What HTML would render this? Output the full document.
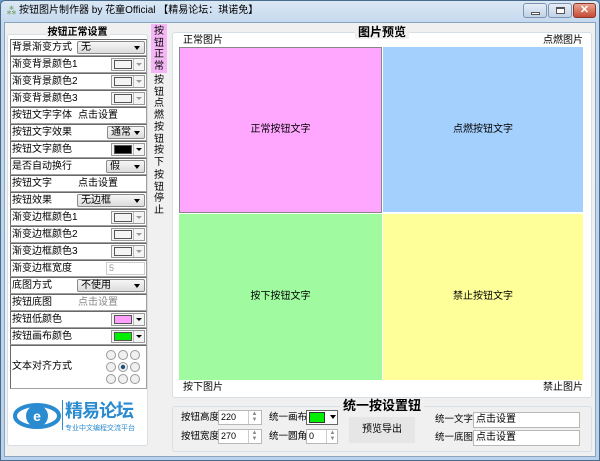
<!DOCTYPE html><html><head><meta charset="utf-8"><style>
*{margin:0;padding:0;box-sizing:border-box}
body{width:600px;height:461px;overflow:hidden;background:#6a9ac4;font-family:"Liberation Sans","Noto Sans CJK SC",sans-serif;font-size:10px;line-height:12px;color:#000;position:relative;white-space:nowrap}
.a{position:absolute}
.win{left:0;top:0;width:600px;height:461px;background:linear-gradient(#dbe8f5,#c4d8ee 22px,#b9d1ea);border:1px solid #4a6a8c;border-radius:5px 5px 0 0}
.client{left:4px;top:22px;width:592px;height:435px;background:#f0f0f0;border:1px solid #8aa5c2}
.gb{border:1px solid #d5dfe5;border-radius:3px;background:#fff}
.row{position:absolute;left:10px;width:137px;height:17px;background:#fff;border:1px solid #a0a0a0;border-top-color:#696969;border-left-color:#696969}
.row .l{position:absolute;left:1px;top:2px;white-space:nowrap}
.row .v{position:absolute;left:67px;top:2px}
.dd{position:absolute;right:1px;top:1px;height:13px;background:linear-gradient(#f6f6f6,#dcdcdc);border:1px solid #8a8a8a;border-radius:2px;padding-left:3px;line-height:11px}
.dd:after{content:"";position:absolute;right:4px;top:4px;border:3px solid transparent;border-top:4px solid #000}
.cb{position:absolute;right:1px;top:1px;width:34px;height:13px;border:1px solid #999;background:#f4f4f4}
.cb i{position:absolute;left:2px;top:1px;width:18px;height:9px;border:1px solid #555}
.cb b{position:absolute;right:0;top:0;width:11px;height:11px;border-left:1px solid #bbb}
.cb b:after{content:"";position:absolute;left:2px;top:4px;border:3px solid transparent;border-top:3px solid #999}
.cb.k b:after{border-top-color:#000}
.q{position:absolute;font-size:10px;display:flex;align-items:center;justify-content:center}
.tb{position:absolute;width:14px;font-size:10px;line-height:12px;text-align:center;white-space:normal}
.inp{position:absolute;background:#fff;border:1px solid #b8b8b8;height:15px;padding-left:2px;line-height:13px;font-size:9px}
.sp{position:absolute;width:12px;height:13px;border-left:1px solid #ccc;font-size:6px;color:#888;text-align:center;line-height:6px}
</style></head><body>
<div class="a win"></div>
<div class="a" style="left:6px;top:5px;font-size:11px;color:#5a8a3a">⁂</div>
<div class="a" style="left:19px;top:5px;font-size:10px">按钮图片制作器 by 花童Official 【精易论坛：琪诺免】</div>
<div class="a" style="left:523px;top:3px;width:24px;height:15px;border:1px solid #7d93b0;border-radius:3px;background:linear-gradient(#e6eef7,#c1d2e6)"><div class="a" style="left:7px;top:8px;width:9px;height:3px;border:1px solid #555;background:#fff"></div></div>
<div class="a" style="left:548px;top:3px;width:24px;height:15px;border:1px solid #7d93b0;border-radius:3px;background:linear-gradient(#e6eef7,#c1d2e6)"><div class="a" style="left:7px;top:3px;width:9px;height:7px;border:1px solid #555;border-top-width:2px;background:#fff"></div></div>
<div class="a" style="left:573px;top:3px;width:23px;height:15px;border:1px solid #8a3b2c;border-radius:3px;background:linear-gradient(#e9a48f,#c74b33);color:#fff;font-weight:bold;text-align:center;line-height:13px;font-size:11px">✕</div>
<div class="a client"></div>

<!-- left group -->
<div class="a gb" style="left:7px;top:34px;width:141px;height:412px"></div>
<div class="a" style="left:7px;top:27px;width:141px;text-align:center;font-weight:bold;font-size:10px"><span style="background:#f0f0f0;padding:0 2px">按钮正常设置</span></div>

<div class="row" style="top:39px"><span class="l">背景渐变方式</span><div class="dd" style="left:66px;width:68px">无</div></div>
<div class="row" style="top:56px"><span class="l">渐变背景颜色1</span><div class="cb"><i style="background:#f4f4f4"></i><b></b></div></div>
<div class="row" style="top:73px"><span class="l">渐变背景颜色2</span><div class="cb"><i style="background:#f4f4f4"></i><b></b></div></div>
<div class="row" style="top:90px"><span class="l">渐变背景颜色3</span><div class="cb"><i style="background:#f4f4f4"></i><b></b></div></div>
<div class="row" style="top:107px"><span class="l">按钮文字字体</span><span class="v">点击设置</span></div>
<div class="row" style="top:124px"><span class="l">按钮文字效果</span><div class="dd" style="left:96px;width:38px">通常</div></div>
<div class="row" style="top:141px"><span class="l">按钮文字颜色</span><div class="cb k"><i style="background:#000"></i><b></b></div></div>
<div class="row" style="top:158px"><span class="l">是否自动换行</span><div class="dd" style="left:95px;width:39px">假</div></div>
<div class="row" style="top:175px"><span class="l">按钮文字</span><span class="v">点击设置</span></div>
<div class="row" style="top:192px"><span class="l">按钮效果</span><div class="dd" style="left:66px;width:68px">无边框</div></div>
<div class="row" style="top:209px"><span class="l">渐变边框颜色1</span><div class="cb"><i style="background:#f4f4f4"></i><b></b></div></div>
<div class="row" style="top:226px"><span class="l">渐变边框颜色2</span><div class="cb"><i style="background:#f4f4f4"></i><b></b></div></div>
<div class="row" style="top:243px"><span class="l">渐变边框颜色3</span><div class="cb"><i style="background:#f4f4f4"></i><b></b></div></div>
<div class="row" style="top:260px"><span class="l">渐变边框宽度</span><div class="a" style="left:95px;top:1px;width:39px;height:13px;border:1px solid #ccc;color:#999;padding-left:2px;line-height:11px;font-size:9px">5</div></div>
<div class="row" style="top:277px"><span class="l">底图方式</span><div class="dd" style="left:66px;width:68px">不使用</div></div>
<div class="row" style="top:294px"><span class="l">按钮底图</span><span class="v" style="color:#888">点击设置</span></div>
<div class="row" style="top:311px"><span class="l">按钮低颜色</span><div class="cb k"><i style="background:#ffa0ff"></i><b></b></div></div>
<div class="row" style="top:328px"><span class="l">按钮画布颜色</span><div class="cb k"><i style="background:#00ee00"></i><b></b></div></div>
<div class="row" style="top:345px;height:44px"><span class="l" style="top:15px">文本对齐方式</span>
<svg class="a" style="left:93px;top:2px" width="40" height="40" viewBox="0 0 40 40"><g fill="#f0f0f0" stroke="#999"><circle cx="7" cy="7" r="4.5"/><circle cx="19" cy="7" r="4.5"/><circle cx="31" cy="7" r="4.5"/><circle cx="7" cy="19" r="4.5"/><circle cx="19" cy="19" r="4.5"/><circle cx="31" cy="19" r="4.5"/><circle cx="7" cy="31" r="4.5"/><circle cx="19" cy="31" r="4.5"/><circle cx="31" cy="31" r="4.5"/></g><circle cx="19" cy="19" r="2.2" fill="#1d4f80"/></svg></div>
<!-- logo -->
<svg class="a" style="left:12px;top:398px" width="50" height="36" viewBox="0 0 50 36"><ellipse cx="25" cy="18" rx="22" ry="11" fill="none" stroke="#2a8bd0" stroke-width="4"/><circle cx="25" cy="18" r="11" fill="#2a8bd0"/><text x="25" y="23" font-size="14" fill="#fff" text-anchor="middle" font-weight="bold" font-family="Liberation Sans">e</text></svg>
<div class="a" style="left:62px;top:400px;width:1px;height:30px;background:#2a8bd0"></div>
<div class="a" style="left:65px;top:400px;font-size:18px;line-height:22px;font-weight:bold;color:#2a8bd0;letter-spacing:-1px">精易论坛</div>
<div class="a" style="left:65px;top:425px;font-size:7px;line-height:8px;color:#2a8bd0">专业中文编程交流平台</div>

<!-- tabs -->
<div class="a" style="left:151px;top:24px;width:16px;height:49px;background:#f4b6f4"></div>
<div class="tb" style="left:152px;top:26px;line-height:11.5px">按<br>钮<br>正<br>常</div>
<div class="tb" style="left:152px;top:75px;line-height:11.5px">按<br>钮<br>点<br>燃</div>
<div class="tb" style="left:152px;top:122px;line-height:11.5px">按<br>钮<br>按<br>下</div>
<div class="tb" style="left:152px;top:170px;line-height:11.5px">按<br>钮<br>停<br>止</div>

<!-- preview -->
<div class="a gb" style="left:172px;top:32px;width:420px;height:366px"></div>
<div class="a" style="left:172px;top:25px;width:420px;text-align:center;font-weight:bold;font-size:12px;line-height:14px"><span style="background:#f0f0f0;padding:0 3px">图片预览</span></div>
<div class="a" style="left:183px;top:35px;font-size:10px">正常图片</div>
<div class="a" style="left:543px;top:35px;font-size:10px">点燃图片</div>
<div class="a" style="left:183px;top:382px;font-size:10px">按下图片</div>
<div class="a" style="left:543px;top:382px;font-size:10px">禁止图片</div>
<div class="q" style="left:179px;top:47px;width:203px;height:166px;background:#ffa6ff;border:1px solid #888">正常按钮文字</div>
<div class="q" style="left:383px;top:47px;width:200px;height:165px;background:#a4d0fe">点燃按钮文字</div>
<div class="q" style="left:179px;top:214px;width:203px;height:166px;background:#a0fba0">按下按钮文字</div>
<div class="q" style="left:383px;top:214px;width:200px;height:166px;background:#ffff99">禁止按钮文字</div>

<!-- bottom -->
<div class="a gb" style="left:172px;top:406px;width:420px;height:46px;background:#f0f0f0"></div>
<div class="a" style="left:172px;top:398px;width:420px;text-align:center;font-weight:bold;font-size:13px;line-height:15px"><span style="background:#f0f0f0;padding:0 3px">统一按设置钮</span></div>
<div class="a" style="left:181px;top:412px;font-size:9.5px">按钮高度</div>
<div class="inp" style="left:218px;top:410px;width:44px">220</div>
<div class="sp" style="left:248px;top:411px">▲<br>▼</div>
<div class="a" style="left:181px;top:431px;font-size:9.5px">按钮宽度</div>
<div class="inp" style="left:218px;top:429px;width:44px">270</div>
<div class="sp" style="left:248px;top:430px">▲<br>▼</div>
<div class="a" style="left:269px;top:412px;font-size:9.5px">统一画布</div>
<div class="a" style="left:306px;top:410px;width:32px;height:15px;border:1px solid #666;background:#fff"><div class="a" style="left:2px;top:1px;width:16px;height:11px;background:#00ee00;border:1px solid #333"></div><div class="a" style="left:23px;top:4px;border:3px solid transparent;border-top:4px solid #000"></div></div>
<div class="a" style="left:269px;top:431px;font-size:9.5px">统一圆角</div>
<div class="inp" style="left:306px;top:429px;width:32px">0</div>
<div class="sp" style="left:326px;top:430px">▲<br>▼</div>
<div class="a" style="left:349px;top:417px;width:66px;height:26px;background:#e6e6e6;font-size:10px;text-align:center;line-height:26px">预览导出</div>
<div class="a" style="left:435px;top:414px;font-size:9.5px">统一文字</div>
<div class="inp" style="left:473px;top:412px;width:107px;height:16px;font-size:10px">点击设置</div>
<div class="a" style="left:435px;top:432px;font-size:9.5px">统一底图</div>
<div class="inp" style="left:473px;top:430px;width:107px;height:16px;font-size:10px">点击设置</div>
</body></html>
